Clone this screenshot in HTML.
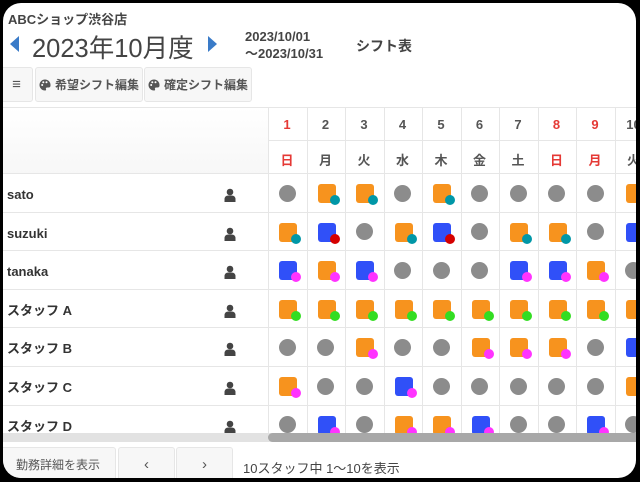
<!DOCTYPE html>
<html><head><meta charset="utf-8"><style>
*{margin:0;padding:0;box-sizing:border-box}
body{width:640px;height:482px;background:#000;overflow:hidden;font-family:"Liberation Sans","Noto Sans CJK JP",sans-serif;color:#444}
#f{position:absolute;left:3px;top:3px;width:633px;height:475px;background:#fff;border-radius:18px;overflow:hidden}
.a{position:absolute}
.btn{position:absolute;background:#f7f7f7;border:1px solid #e6e6e6;border-radius:3px;font-size:12px;color:#555;font-weight:bold;display:flex;align-items:center;justify-content:center}
.tri{position:absolute;width:0;height:0;border-top:8px solid transparent;border-bottom:8px solid transparent}
.vl{position:absolute;width:1px;background:#e6e6e6}
.hl{position:absolute;height:1px;background:#e6e6e6}
.dn{position:absolute;width:38px;text-align:center;font-size:13px;font-weight:bold;color:#555}
.r{color:#e53935}
.nm{position:absolute;left:4px;font-size:13px;font-weight:bold;color:#333;line-height:16px;height:16px;display:flex;align-items:center}
.pal{margin-right:4px}
</style></head><body><div id="f">
<div class="a" style="left:5px;top:6px;font-size:13px;font-weight:bold;color:#444">ABCショップ渋谷店</div>
<div class="tri" style="left:7px;top:33px;border-right:9px solid #3a7bc8"></div>
<div class="a" style="left:29px;top:25px;font-size:25.5px;color:#444">2023年10月度</div>
<div class="tri" style="left:205px;top:33px;border-left:9px solid #3a7bc8"></div>
<div class="a" style="left:242px;top:25px;font-size:13px;line-height:17px;color:#444;font-weight:bold">2023/10/01<br>〜2023/10/31</div>
<div class="a" style="left:353px;top:33px;font-size:14px;font-weight:bold;color:#444">シフト表</div>
<div class="btn" style="left:-3px;top:64px;width:33px;height:35px;font-size:15px">≡</div>
<div class="btn" style="left:32px;top:64px;width:108px;height:35px"><svg class="pal" width="12" height="12" viewBox="0 0 12 12"><path d="M6 0.5A5.5 5.5 0 0 0 6 11.5c1 0 1.3-.7 1-1.4-.4-.9.2-1.6 1.1-1.6H9.5A2 2 0 0 0 11.5 6.5 5.5 5.5 0 0 0 6 0.5z" fill="#555"/><circle cx="3.2" cy="6" r="1" fill="#fff"/><circle cx="4.3" cy="3.3" r="1" fill="#fff"/><circle cx="7.5" cy="3.2" r="1" fill="#fff"/></svg>希望シフト編集</div>
<div class="btn" style="left:141px;top:64px;width:108px;height:35px"><svg class="pal" width="12" height="12" viewBox="0 0 12 12"><path d="M6 0.5A5.5 5.5 0 0 0 6 11.5c1 0 1.3-.7 1-1.4-.4-.9.2-1.6 1.1-1.6H9.5A2 2 0 0 0 11.5 6.5 5.5 5.5 0 0 0 6 0.5z" fill="#555"/><circle cx="3.2" cy="6" r="1" fill="#fff"/><circle cx="4.3" cy="3.3" r="1" fill="#fff"/><circle cx="7.5" cy="3.2" r="1" fill="#fff"/></svg>確定シフト編集</div>
<div class="hl" style="left:0;top:104px;width:640px"></div>
<div class="a" style="left:0;top:105px;width:265px;height:66px;background:linear-gradient(#fff,#f7f7f7)"></div>
<div id="g"></div>
<div class="a" style="left:0;top:430px;width:640px;height:9px;background:#e2e2e2"></div>
<div class="a" style="left:265px;top:430px;width:380px;height:9px;background:#a8a8a8;border-radius:5px"></div>
<div class="btn" style="left:-3px;top:444px;width:116px;height:34px;font-weight:normal">勤務詳細を表示</div>
<div class="btn" style="left:115px;top:444px;width:57px;height:34px;font-size:15px;font-weight:normal">‹</div>
<div class="btn" style="left:173px;top:444px;width:57px;height:34px;font-size:15px;font-weight:normal">›</div>
<div class="a" style="left:240px;top:455px;font-size:13px;color:#444">10スタッフ中 1〜10を表示</div>
</div>
<script>
var g=document.getElementById('g'),h='';
var O='#f7931e',B='#3050f8',T='#0097a7',R='#d50000',P='#ff33ff',G='#33dd22';
var days=['日','月','火','水','木','金','土','日','月','火'];
var rows=[['sato','G OT OT G OT G G G G OT'],['suzuki','OT BR G OT BR G OT OT G BT'],['tanaka','BP OP BP G G G BP BP OP G'],['スタッフ A','OG OG OG OG OG OG OG OG OG OG'],['スタッフ B','G G OP G G OP OP OP G BP'],['スタッフ C','OP G G BP G G G G G OP'],['スタッフ D','G BP G OP OP BP G G BP G']];
var C={O:O,B:B,T:T,R:R,P:P,G:G};
for(var i=0;i<11;i++){var x=265+i*38.5;h+='<div class="vl" style="left:'+x+'px;top:105px;height:325px"></div>';}
h+='<div class="hl" style="left:265px;top:137px;width:380px"></div>';
for(var i=0;i<10;i++){var x=265+i*38.5;var c=(i==0||i==7||i==8)?' r':'';
h+='<div class="dn'+c+'" style="left:'+x+'px;top:114px">'+(i+1)+'</div>';
h+='<div class="dn'+c+'" style="left:'+x+'px;top:147px">'+days[i]+'</div>';}
for(var r=0;r<7;r++){var cy=190+r*38.6;
h+='<div class="hl" style="left:0;top:'+(cy-20)+'px;width:640px"></div>';
h+='<div class="nm" style="top:'+(cy-6)+'px">'+rows[r][0]+'</div>';
h+='<svg class="a" style="left:221px;top:'+(cy-5)+'px" width="12" height="14" viewBox="0 0 12 14"><circle cx="6" cy="4" r="3.3" fill="#444"/><path d="M0.5 14v-2.5q0-4 4-4h3q4 0 4 4V14z" fill="#444"/></svg>';
var cs=rows[r][1].split(' ');
for(var i=0;i<10;i++){var cx=284+i*38.5,s=cs[i];
if(s=='G')h+='<div class="a" style="left:'+(cx-8.5)+'px;top:'+(cy-8.5)+'px;width:17px;height:17px;border-radius:50%;background:#8c8c8c"></div>';
else{h+='<div class="a" style="left:'+(cx-8)+'px;top:'+(cy-9)+'px;width:18px;height:19px;border-radius:3px;background:'+C[s[0]]+'"></div>';
h+='<div class="a" style="left:'+(cx+4)+'px;top:'+(cy+2)+'px;width:10px;height:10px;border-radius:50%;background:'+C[s[1]]+'"></div>';}}}
g.innerHTML=h;
</script>
</body></html>
